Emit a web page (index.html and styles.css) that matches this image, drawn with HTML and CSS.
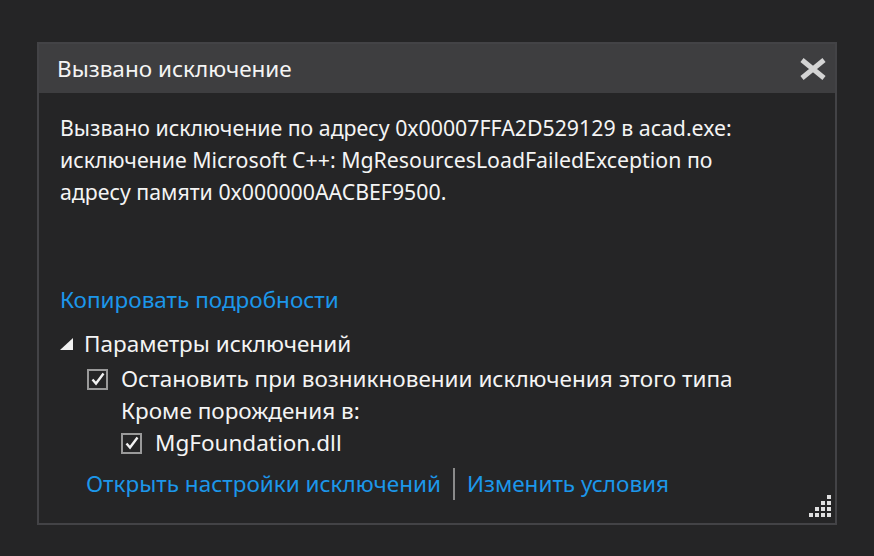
FILE: index.html
```html
<!DOCTYPE html>
<html lang="ru">
<head>
    <meta charset="UTF-8">
    <title>Вызвано исключение</title>
    <link rel="stylesheet" href="styles.css">
</head>
<body>

    <!-- Exception helper dialog -->
    <div class="dialog">
        <div class="dialog-header">
            <span class="dialog-title">Вызвано исключение</span>
            <svg class="close-icon" width="28" height="22" viewBox="0 0 28 22">
                <path d="M3 2 L25 20 M25 2 L3 20" stroke="#d4d4d4" stroke-width="5"/>
            </svg>
        </div>

        <div class="dialog-body">
            <p class="message">Вызвано исключение по адресу 0x00007FFA2D529129 в acad.exe:<br>исключение Microsoft C++: MgResourcesLoadFailedException по<br>адресу памяти 0x000000AACBEF9500.</p>

            <a class="link copy-link">Копировать подробности</a>

            <div class="section-title">
                <svg class="expander" width="14" height="13" viewBox="0 0 14 13">
                    <polygon points="13,0 13,12 0,12" fill="#f1f1f1"/>
                </svg>
                Параметры исключений
            </div>

            <div class="option first">
                <span class="checkbox">
                    <svg width="16" height="16" viewBox="0 0 16 16"><path d="M2.5 8.5 L6 12.5 L13.5 2.5" fill="none" stroke="#f1f1f1" stroke-width="2.4"/></svg>
                </span>
                Остановить при возникновении исключения этого типа
            </div>
            <div class="option sub">Кроме порождения в:</div>
            <div class="option sub">
                <span class="checkbox">
                    <svg width="16" height="16" viewBox="0 0 16 16"><path d="M2.5 8.5 L6 12.5 L13.5 2.5" fill="none" stroke="#f1f1f1" stroke-width="2.4"/></svg>
                </span>
                MgFoundation.dll
            </div>

            <div class="links">
                <a class="link">Открыть настройки исключений</a>
                <span class="divider"></span>
                <a class="link">Изменить условия</a>
            </div>
        </div>

        <svg class="grip" width="24" height="24" viewBox="0 0 24 24">
            <rect x="20" y="0" width="4" height="4" fill="#e0e0e0"/>
            <rect x="14" y="6" width="4" height="4" fill="#e0e0e0"/>
            <rect x="20" y="6" width="4" height="4" fill="#e0e0e0"/>
            <rect x="8" y="12" width="4" height="4" fill="#e0e0e0"/>
            <rect x="14" y="12" width="4" height="4" fill="#e0e0e0"/>
            <rect x="20" y="12" width="4" height="4" fill="#e0e0e0"/>
            <rect x="2" y="18" width="4" height="4" fill="#e0e0e0"/>
            <rect x="8" y="18" width="4" height="4" fill="#e0e0e0"/>
            <rect x="14" y="18" width="4" height="4" fill="#e0e0e0"/>
            <rect x="20" y="18" width="4" height="4" fill="#e0e0e0"/>
        </svg>
    </div>

</body>
</html>
```

FILE: styles.css
```css
body {
    margin: 0;
    padding: 42px 0 0 37px;
    background-color: #252526;
    color: #f4f4f4;
    font-family: "Noto Sans", "Open Sans", sans-serif;
}
.dialog {
    position: relative;
    width: 796px;
    height: 479px;
    border: 2px solid #434346;
    background-color: #252526;
}
.dialog-header {
    display: flex;
    align-items: center;
    justify-content: space-between;
    height: 49px;
    padding: 0 8px 0 18px;
    background-color: #3e3e40;
}
.dialog-title {
    font-size: 22.5px;
}
.close-icon {
    display: block;
}
.dialog-body {
    padding: 19px 0 0 21px;
}
.message {
    margin: 0;
    font-size: 21.3px;
    line-height: 32px;
}
.link {
    color: #1c97ea;
    font-size: 22.5px;
    cursor: pointer;
}
.copy-link {
    display: block;
    margin-top: 76px;
    line-height: 32px;
}
.section-title {
    display: flex;
    align-items: center;
    gap: 10px;
    margin-top: 12px;
    font-size: 22.5px;
    line-height: 32px;
}
.expander {
    display: block;
    margin-top: 1px;
}
.option {
    display: flex;
    align-items: center;
    gap: 13px;
    margin-left: 27px;
    font-size: 22.5px;
    line-height: 32px;
}
.option.first {
    margin-top: 3px;
}
.option.sub {
    margin-left: 61px;
}
.checkbox {
    display: flex;
    align-items: center;
    justify-content: center;
    width: 17px;
    height: 17px;
    border: 2px solid #9a9a9a;
}
.checkbox svg {
    display: block;
}
.links {
    display: flex;
    align-items: center;
    gap: 12px;
    margin: 9px 0 0 26px;
    line-height: 32px;
}
.divider {
    width: 2px;
    height: 32px;
    background-color: #8a8a8a;
}
.grip {
    position: absolute;
    right: 4px;
    bottom: 4px;
}
```
